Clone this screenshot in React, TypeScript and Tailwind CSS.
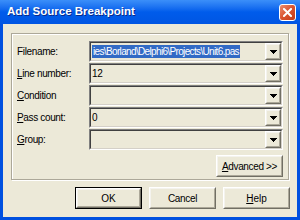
import React from 'react';

const font = { fontFamily: '"Liberation Sans", Arial, sans-serif' };

function Arrow() {
  return (
    <svg width="7" height="4" viewBox="0 0 7 4" shapeRendering="crispEdges">
      <path d="M0 0h7v1h-1v1h-1v1h-1v1h-1v-1h-1v-1h-1v-1h-1z" fill="#000" />
    </svg>
  );
}

function Raised({ className = '', children }: { className?: string; children?: React.ReactNode }) {
  return (
    <div className={`border border-t-white border-l-white border-b-[#716f64] border-r-[#716f64] ${className}`}>
      <div className="h-full w-full flex items-center justify-center border border-t-[#f4f3ee] border-l-[#f4f3ee] border-b-[#aca899] border-r-[#aca899]">
        {children}
      </div>
    </div>
  );
}

function Combo({ children }: { children?: React.ReactNode }) {
  return (
    <div className="h-[21px] flex-1 border border-t-[#808080] border-l-[#808080] border-b-white border-r-white">
      <div className="h-full flex border border-t-[#404040] border-l-[#404040] border-b-[#d4d0c8] border-r-[#d4d0c8] bg-[#ece9d8]">
        <div className="flex-1 flex items-center pl-[1px] pr-[2px] overflow-hidden whitespace-nowrap text-[10px] tracking-[-0.35px] text-black">
          {children}
        </div>
        <Raised className="w-[16px] h-full">
          <Arrow />
        </Raised>
      </div>
    </div>
  );
}

function Row({ label, children }: { label: React.ReactNode; children?: React.ReactNode }) {
  return (
    <div className="flex items-center h-[21px]">
      <div className="w-[72px] text-[10px] tracking-[-0.35px] text-black whitespace-nowrap">{label}</div>
      <Combo>{children}</Combo>
    </div>
  );
}

export default function App() {
  return (
    <div className="w-[300px] h-[220px] flex flex-col bg-[#0050e0] overflow-hidden" style={font}>
      <div className="h-[24px] flex items-center justify-between pl-[7px] pr-[4px] bg-gradient-to-b from-[#3b8ff9] via-[#005ceb] to-[#0055e3]">
        <span className="text-white font-bold text-[11.5px] [text-shadow:1px_1px_0_#0a2a8a]">
          Add Source Breakpoint
        </span>
        <div className="w-[17px] h-[17px] rounded-[3px] border border-white flex items-center justify-center bg-gradient-to-br from-[#ec8d6e] via-[#d9532f] to-[#c43a17]">
          <svg width="9" height="9" viewBox="0 0 9 9">
            <path d="M1 1L8 8M8 1L1 8" stroke="#fff" strokeWidth="2" strokeLinecap="square" />
          </svg>
        </div>
      </div>
      <div className="flex-1 mx-[3px] mb-[3px] bg-[#ece9d8] flex flex-col">
        <div className="mt-[9px] mx-[8px] h-[147px] border border-[#aca899] shadow-[inset_1px_1px_0_#fff,1px_1px_0_#fff] pt-[7px] pl-[5px] pr-[5px] flex flex-col gap-[1px]">
          <Row label="Filename:">
            <span className="bg-[#316ac5] text-white px-[1px] leading-[13px] tracking-[-0.65px]">ies\Borland\Delphi6\Projects\Unit6.pas</span>
          </Row>
          <Row label={<><u>L</u>ine number:</>}>12</Row>
          <Row label={<><u>C</u>ondition</>} />
          <Row label={<><u>P</u>ass count:</>}>0</Row>
          <Row label={<><u>G</u>roup:</>} />
          <div className="flex justify-end mt-[4px]">
            <Raised className="w-[67px] h-[22px]">
              <span className="text-[10px] tracking-[-0.35px] text-black"><u>A</u>dvanced &gt;&gt;</span>
            </Raised>
          </div>
        </div>
        <div className="mt-[7px] mr-[7px] flex justify-end gap-[7px]">
          <div className="border border-black">
            <Raised className="w-[65px] h-[20px]">
              <span className="text-[10px] text-black">OK</span>
            </Raised>
          </div>
          <Raised className="w-[67px] h-[22px]">
            <span className="text-[10px] tracking-[-0.35px] text-black">Cancel</span>
          </Raised>
          <Raised className="w-[67px] h-[22px]">
            <span className="text-[10px] text-black"><u>H</u>elp</span>
          </Raised>
        </div>
      </div>
    </div>
  );
}
